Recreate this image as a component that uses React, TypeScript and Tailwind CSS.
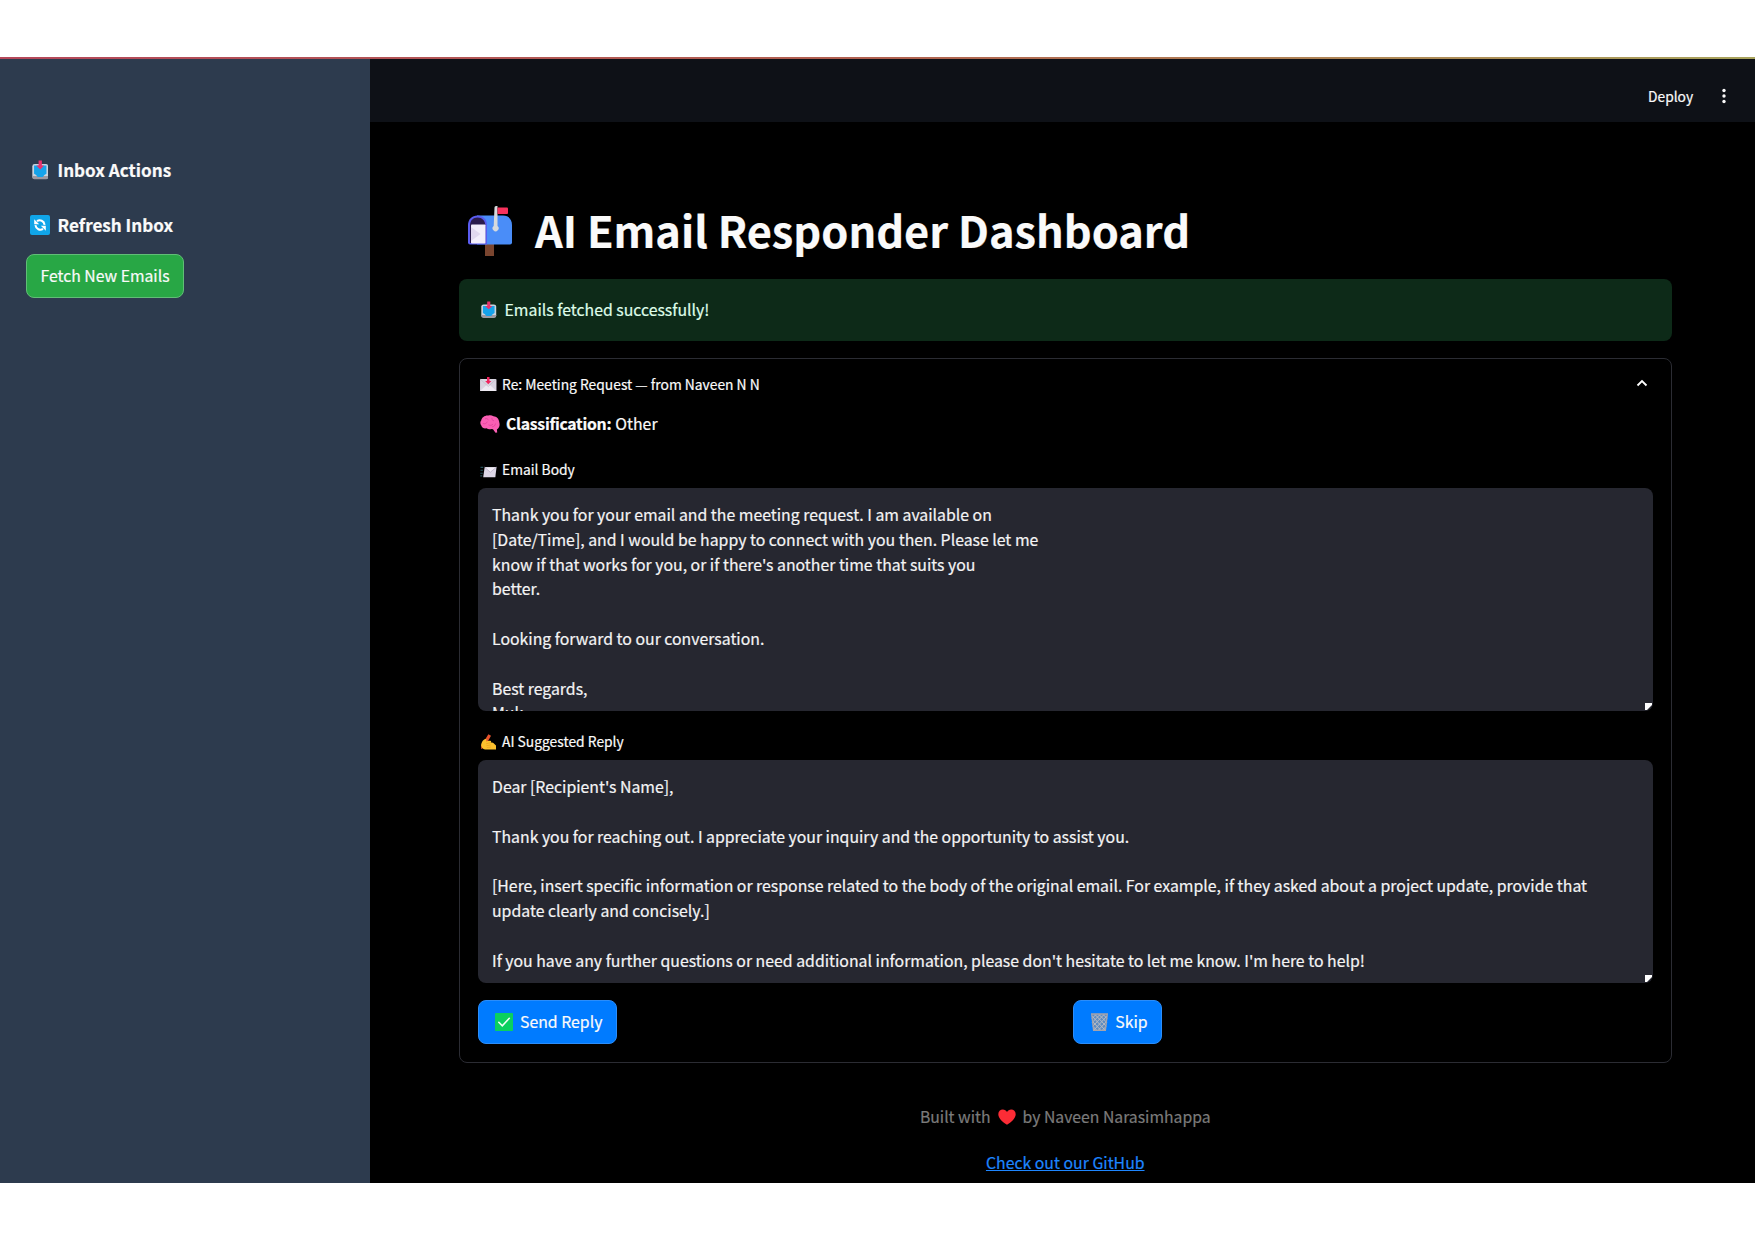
import React from "react";

type IconProps = { className?: string };

const InboxTray = ({ className }: IconProps) => (
  <svg viewBox="0 0 16 20" className={className} preserveAspectRatio="none">
    <rect x="0.3" y="4" width="15.4" height="15" rx="2.4" fill="#c9d3de" />
    <path d="M0.3 16h15.4v1.2a2 2 0 0 1-2 2H2.3a2 2 0 0 1-2-2z" fill="#9c9aa3" />
    <path d="M2 5.6h12v8.2l-2 1.2-1.5 2h-5L4 15l-2-1.2z" fill="#16a3ea" />
    <path d="M6.4 0.6h3.2v5h2.2L8 9.400 4.200 5.600h2.200z" fill="#e8336d" />
  </svg>
);

const Refresh = ({ className }: IconProps) => (
  <svg viewBox="0 0 20 20" className={className}>
    <rect width="20" height="20" rx="2" fill="#10a5e8" />
    <g fill="none" stroke="#fff" strokeWidth="2">
      <path d="M7 6.200C10 4.200 14 5.800 14.600 9.800" />
      <path d="M13 13.800C10 15.800 6 14.200 5.400 10.200" />
    </g>
    <path d="M4.200 4.200v5h5zM15.800 15.800v-5h-5z" fill="#fff" />
  </svg>
);

const Mailbox = ({ className }: IconProps) => (
  <svg viewBox="0 0 44 50" className={className}>
    <rect x="17" y="34" width="9" height="16" fill="#7a452f" />
    <path d="M9 9.500h26c5.500 0 9 4 9 9.500v17.500a2 2 0 0 1-2 2H9z" fill="#4a8df8" />
    <path d="M0 19C0 13.500 4 9.500 9.500 9.500S19 13.500 19 19v19.500H2a2 2 0 0 1-2-2z" fill="#5a5cf0" />
    <path d="M2 19.500c0-5 3-8 7.500-8s7.800 3 7.800 8V37H2z" fill="#2b1b4d" />
    <rect x="3" y="18.500" width="14.500" height="19" rx="0.800" fill="#f4eefb" />
    <path d="M3 21l9.500 7L3 35z" fill="#e2d8ef" />
    <path d="M26.500 1.500a1.500 1.500 0 0 1 1.500-1.500h1.500v20a3 3 0 1 1-3.800 0z" fill="#d5d9dd" />
    <path d="M29.500 1.500H39a1 1 0 0 1 1 1V7a1 1 0 0 1-1 1h-9.500z" fill="#f8325c" />
  </svg>
);

const IncomingEnvelope = ({ className }: IconProps) => (
  <svg viewBox="0 0 17 15" className={className}>
    <rect x="0" y="2" width="17" height="13" rx="0.800" fill="#d8d3df" />
    <path d="M0 14.500l6.500-6h4l6.500 6z" fill="#eeeaf2" />
    <path d="M0.500 2.500l8 7.300 8-7.300" fill="none" stroke="#c3bdcb" strokeWidth="0.800" />
    <path d="M7.200 0h2.600v4.200h1.900L8.500 7.500 5.300 4.200h1.900z" fill="#f0245e" />
  </svg>
);

const Brain = ({ className }: IconProps) => (
  <svg viewBox="0 0 20 18" className={className}>
    <path
      d="M8.500 0.500C5 0 1.800 2.300 1.300 5.200 0 6.500 0 9 1.300 10.500c.5 2.300 3 3.300 5.200 2.800 1.500 1 3.500 1 5 .6l1.500.3 2.500 3.600 1.700-.4-.3-2.900c2.500-1.500 3.200-4.500 2.400-7C19 3.500 16.500 1.300 13.500 1.200 12 .3 10 .1 8.500.5z"
      fill="#fb5fb4"
    />
    <path
      d="M5 3.800c1.500-.6 3 0 3.500 1.500M2.800 8.500c2 .8 4-.2 4.500-1.800M12 2.800c-.5 1.500.3 2.800 2 3M8.500 9.800c1.500 1 3.500.6 4.500-.8M15.500 8.500c-.3 2-1.500 3.200-3.500 3.400"
      fill="none"
      stroke="#e0439a"
      strokeWidth="0.800"
    />
  </svg>
);

const FlyingEnvelope = ({ className }: IconProps) => (
  <svg viewBox="0 0 17 12" className={className}>
    <path d="M0.500 1.200h2.800M0.500 4.200h2.500M0.300 7.200h2.500M0.300 10h2" stroke="#26505a" strokeWidth="1.100" />
    <path d="M4.800 1H17l-1.200 10.500H3.300z" fill="#dcd6e6" />
    <path d="M4.800 1H17l-6.400 5.200z" fill="#f1edf6" />
    <path d="M4.800 1l5.800 5.300L17 1" fill="none" stroke="#b2a8c0" strokeWidth="0.700" />
  </svg>
);

const WritingHand = ({ className }: IconProps) => (
  <svg viewBox="0 0 16 16" className={className}>
    <path d="M8.400 0.300l2.600 1.400L4.400 13.400 1 15l.4-3.500z" fill="#e8532c" />
    <path
      d="M1.800 8.600C2.800 6 5 4.700 6.200 5.200c.7.500.3 1.500-.3 2.200 2-.9 4.200-1 5-.3.500.6.2 1.200-.3 1.500 1.500-.1 2.800.3 3.800 1.300l1.600 1.500v4.100H7.500c-2 .2-4.300-.2-5-1.500C1.200 13 .5 11 1.800 8.600z"
      fill="#fcc02e"
    />
    <path d="M6 9.800l4-1M6.400 11.700l4.400-.8M6.800 13.600l4-.5" stroke="#e9a020" strokeWidth="0.700" fill="none" />
  </svg>
);

const CheckMark = ({ className }: IconProps) => (
  <svg viewBox="0 0 18 18" className={className}>
    <rect width="18" height="18" rx="0.800" fill="#0bd05f" />
    <path d="M3.800 9.300l3.500 3.500 7-7.500" fill="none" stroke="#f2fff6" strokeWidth="1.600" strokeLinecap="round" />
  </svg>
);

const Wastebasket = ({ className }: IconProps) => (
  <svg viewBox="0 0 17 18" className={className}>
    <path d="M0.500 1h16l-1.900 16.500H2.400z" fill="#5f8cc0" />
    <path
      d="M1 3l13 14M4 1.500L15 13M8 1.500l7.800 8M12 1.500l4.300 4M1.500 8.500l8.500 9M2 13.500l4 4M16 3L3 17M13 1.500L2 13M9 1.500l-7.800 8M5 1.500l-4 4M15.500 8.500l-8.500 9M15 13.500l-4 4"
      stroke="#b9bcc4"
      strokeWidth="1"
    />
    <path d="M0.700 1h15.600l-1.900 16.300H2.600z" fill="none" stroke="#a5a3ab" strokeWidth="1.300" />
  </svg>
);

const Heart = ({ className }: IconProps) => (
  <svg viewBox="0 0 18 16" className={className}>
    <path
      d="M9 15.800C5 13.300.3 9.500.3 5.200.3 2.300 2.300.4 4.800.4 6.600.4 8.200 1.300 9 3 9.800 1.300 11.400.4 13.200.4c2.500 0 4.500 1.900 4.500 4.800 0 4.300-4.700 8.100-8.700 10.600z"
      fill="#fb2c36"
    />
  </svg>
);

const ResizeCorner = () => (
  <svg viewBox="0 0 7 7" className="absolute right-[1px] bottom-[1px] size-[7px]">
    <path d="M0 0h7v2L2 7H0z" fill="#fff" />
  </svg>
);

const EMAIL_BODY = `Thank you for your email and the meeting request. I am available on
[Date/Time], and I would be happy to connect with you then. Please let me
know if that works for you, or if there's another time that suits you
better.

Looking forward to our conversation.

Best regards,
Muk`;

const REPLY = `Dear [Recipient's Name],

Thank you for reaching out. I appreciate your inquiry and the opportunity to assist you.

[Here, insert specific information or response related to the body of the original email. For example, if they asked about a project update, provide that update clearly and concisely.]

If you have any further questions or need additional information, please don't hesitate to let me know. I'm here to help!`;

function TextBox({ text }: { text: string }) {
  return (
    <div className="relative mt-2 h-[223px] overflow-hidden rounded-lg bg-[#262730] pt-[15.5px] pr-[48px] pl-[14px] leading-[24.8px] whitespace-pre-wrap text-[#f4f4f5]">
      {text}
      <ResizeCorner />
    </div>
  );
}

export default function App() {
  return (
    <div className='flex h-[1240px] w-[1755px] flex-col overflow-hidden bg-white pt-[57px] font-["Noto_Sans_CJK_SC","Source_Sans_Pro",sans-serif] text-[15.83px] text-[#fafafa] [-webkit-text-stroke:0.2px]'>
      <div className="h-[2px] shrink-0 bg-linear-to-r from-[#b5485a] via-[#b0604f] to-[#a8a35c]" />
      <div className="flex h-[1124px] shrink-0 bg-black">
        <aside className="w-[370px] shrink-0 bg-[#2d3b4e] pt-[98px]">
          <h2 className="flex h-[26px] items-center text-[17.1px] font-bold">
            <InboxTray className="mr-[9.500px] ml-[31.500px] h-5 w-[16.500px]" />
            Inbox Actions
          </h2>
          <h2 className="mt-[29px] flex h-[26px] items-center text-[17.1px] font-bold">
            <Refresh className="mr-[8px] ml-[29.500px] size-5" />
            Refresh Inbox
          </h2>
          <button className="mt-[16px] ml-[26px] flex h-[44px] w-[158px] items-center justify-center rounded-lg border border-[#61bd77] bg-[#28a745] pb-[1px] text-[15.75px] whitespace-nowrap">
            Fetch New Emails
          </button>
        </aside>

        <div className="min-w-0 flex-1">
          <header className="flex h-[63px] items-center bg-[#0e1117] text-[13.8px]">
            <span className="ml-[1278px] pt-[11px]">Deploy</span>
            <svg viewBox="0 0 4 16" className="mt-[11px] ml-[29px] h-4 w-1" fill="#fafafa">
              <circle cx="2" cy="2.500" r="1.700" />
              <circle cx="2" cy="8" r="1.700" />
              <circle cx="2" cy="13.500" r="1.700" />
            </svg>
          </header>

          <main className="ml-[89px] w-[1212.5px] pt-[77px]">
            <h1 className="flex h-[60px] items-center text-[43.35px] font-bold whitespace-nowrap">
              <Mailbox className="mt-[3px] mr-[23px] ml-[9px] h-[50px] w-[44px]" />
              AI Email Responder Dashboard
            </h1>

            <div className="mt-[19.500px] flex h-[62px] items-center rounded-lg bg-[#0d2a18] text-[#dffde9]">
              <InboxTray className="mr-[8px] ml-[22px] h-[17.500px] w-[15.500px]" />
              <span className="pt-[1px]">Emails fetched successfully!</span>
            </div>

            <section className="mt-[17.500px] h-[704.500px] rounded-lg border border-[#2b2c33] px-[18px] pt-[13px]">
              <div className="flex h-6 items-center text-[13.84px]">
                <IncomingEnvelope className="mr-[5.500px] ml-[2px] h-[14.500px] w-[16.500px]" />
                Re: Meeting Request — from Naveen N N
                <svg viewBox="0 0 12 8" className="mr-[5px] mb-[2px] ml-auto h-2 w-3">
                  <path d="M1.500 6.500L6 2l4.500 4.500" fill="none" stroke="#fff" strokeWidth="1.800" />
                </svg>
              </div>

              <div className="mt-[16px] flex h-6 items-center">
                <Brain className="mr-[6px] ml-[2px] h-[18px] w-5" />
                <strong className="mr-[4px] font-bold tracking-[-0.3px]">Classification:</strong>
                Other
              </div>

              <div className="mt-[23.500px] flex h-5 items-center text-[13.84px]">
                <FlyingEnvelope className="mt-[5px] mr-[5.500px] ml-[2px] h-[12px] w-[16.500px]" />
                Email Body
              </div>
              <TextBox text={EMAIL_BODY} />

              <div className="mt-[21px] flex h-5 items-center text-[13.84px]">
                <WritingHand className="mr-[6px] ml-[2px] size-4" />
                AI Suggested Reply
              </div>
              <TextBox text={REPLY} />

              <div className="mt-[17.500px] grid grid-cols-2 gap-4">
                <button className="flex h-[44px] w-[139px] items-center rounded-lg border border-[#2b8dfa] bg-[#007bff] pl-[16px]">
                  <CheckMark className="mr-[7px] size-[18px]" />
                  Send Reply
                </button>
                <button className="flex h-[44px] w-[89px] items-center rounded-lg border border-[#2b8dfa] bg-[#007bff] pl-[17px]">
                  <Wastebasket className="mr-[7px] h-[18px] w-[17px]" />
                  Skip
                </button>
              </div>
            </section>

            <footer className="mt-[42.500px] flex flex-col items-center text-[#7b7b7b]">
              <p className="flex h-6 items-center text-[15.75px]">
                Built with
                <Heart className="mr-[7px] ml-[7px] h-4 w-[18px]" />
                by Naveen Narasimhappa
              </p>
              <a className="mt-[21.500px] flex h-6 items-center text-[#1e86ff] underline">Check out our GitHub</a>
            </footer>
          </main>
        </div>
      </div>
    </div>
  );
}
